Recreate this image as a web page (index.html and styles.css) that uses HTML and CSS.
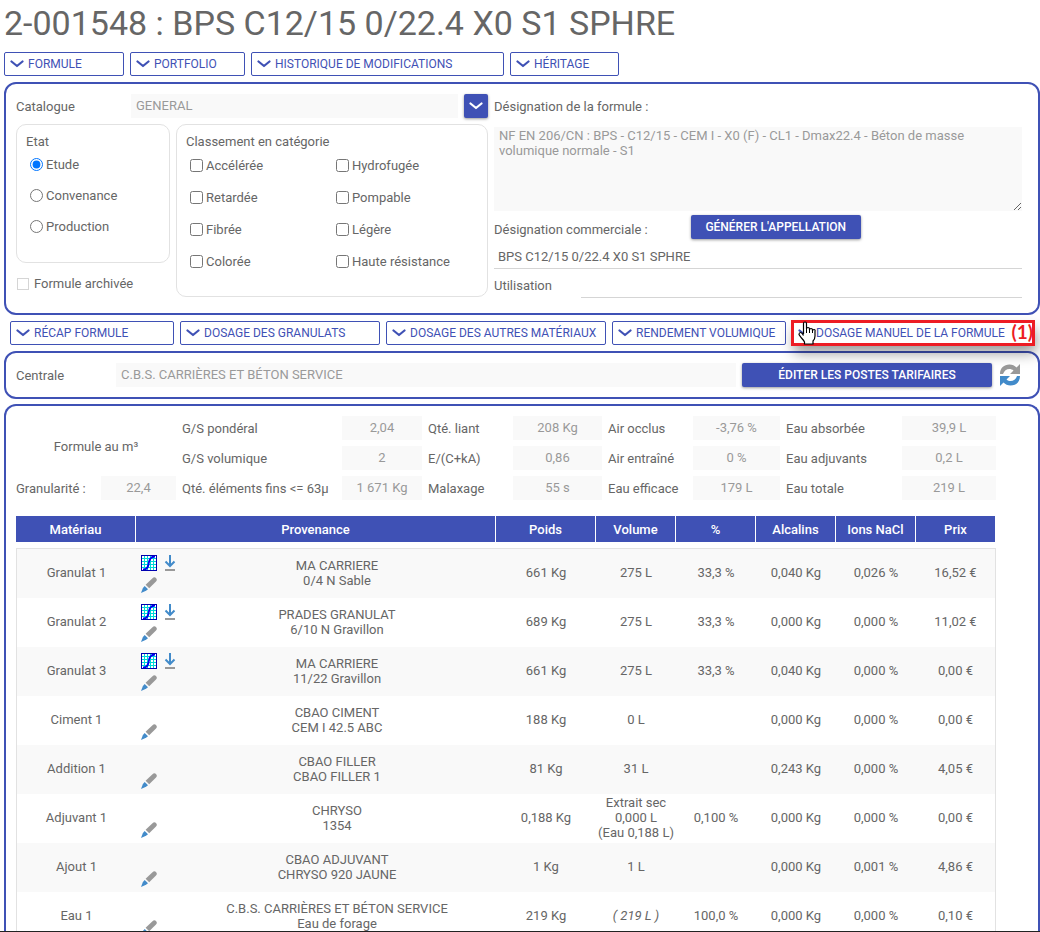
FILE: index.html
```html
<!doctype html>
<html lang="fr">
  <head>
    <meta charset="utf-8">
    <title>2-001548 : BPS C12/15 0/22.4 X0 S1 SPHRE</title>
    <link rel="stylesheet" href="styles.css">
  </head>
  <body>
<svg class="sprite" aria-hidden="true">
  <symbol id="chevron" viewBox="0 0 14 8"><path d="M1.5 1.5 L7 6 L12.500 1.5" fill="none" stroke="currentColor" stroke-width="2.200" stroke-linecap="round" stroke-linejoin="round"/></symbol>
  <symbol id="curve" viewBox="0 0 16 16">
    <rect width="16" height="16" fill="#fff"/>
    <path d="M3.500 1V15M6.500 1V15M9.500 1V15M12.500 1V15M1 3.500H15M1 6.500H15M1 9.500H15M1 12.500H15" stroke="#00d8d8" stroke-width="1"/>
    <path d="M2 14.500H4Q7 13 7.500 9.500Q8 5 9.500 3.500Q11 1.500 14 1.500" fill="none" stroke="#0000f0" stroke-width="1.800"/>
    <rect x=".5" y=".5" width="15" height="15" fill="none" stroke="#0000b0"/>
  </symbol>
  <symbol id="download" viewBox="0 0 12 16">
    <path d="M6 0V11M1.500 6.500L6 11L10.500 6.500" fill="none" stroke="#428bca" stroke-width="2"/>
    <path d="M1 15H11" stroke="#999" stroke-width="2"/>
  </symbol>
  <symbol id="pencil" viewBox="0 0 16 16">
    <path d="M11.500 1.200Q13.200 -.4 15 .9Q16.600 2.800 15 4.500L8.200 11.200L4.600 7.700Z" fill="#999"/>
    <path d="M3.700 9L7 12.200L5 13.700L0 16L1.900 11Z" fill="#428bca"/>
  </symbol>
  <symbol id="refresh" viewBox="0 0 22 24">
    <path d="M1 11C1 5 5 1.500 10.500 1.500C13.500 1.500 15.500 2.500 17.500 4.500L21 1V11H11L14.500 7.500C11 4.500 5.500 6 4 11Z" fill="#999"/>
    <path d="M21 13C21 19 17 22.500 11.500 22.500C8.500 22.500 6.500 21.500 4.500 19.500L1 23V13H11L7.500 16.500C11 19.500 16.500 18 18 13Z" fill="#428bca"/>
  </symbol>
  <symbol id="hand" viewBox="0 0 18 24">
    <path d="M5.500 13V2.500Q5.500 1 7 1T8.500 2.500V8Q8.500 6.500 10 6.500T11.500 8V9Q11.500 7.500 13 7.500T14.500 9V10Q14.500 8.500 16 8.500T17 10.500V15Q17 18 15 20V23H6.500V21Q5.500 19 3.500 17L1 13.500Q1 11.500 2.500 11.500T5.500 14.500" fill="#fff" stroke="#000" stroke-width="1.200"/>
    <path d="M8.500 8V12M11.500 9V12M14.500 10V12" stroke="#000"/>
  </symbol>
</svg>

<main class="page">
<h1>2-001548 : BPS C12/15 0/22.4 X0 S1 SPHRE</h1>

<nav class="toolbar">
  <button class="tab w120"><svg><use href="#chevron"/></svg>FORMULE</button>
  <button class="tab w115"><svg><use href="#chevron"/></svg>PORTFOLIO</button>
  <button class="tab w253"><svg><use href="#chevron"/></svg>HISTORIQUE DE MODIFICATIONS</button>
  <button class="tab w109"><svg><use href="#chevron"/></svg>HÉRITAGE</button>
</nav>

<form class="panel identity">
  <div class="classification">
    <div class="row catalogue">
      <label for="catalogue">Catalogue</label>
      <input type="text" id="catalogue" value="GENERAL" disabled>
      <button type="button" class="solid square" aria-label="Choisir le catalogue"><svg><use href="#chevron"/></svg></button>
    </div>
    <div class="groups">
      <div class="state">
        <fieldset class="box">
          <legend>Etat</legend>
          <label><input type="radio" name="state" checked>Etude</label>
          <label><input type="radio" name="state">Convenance</label>
          <label><input type="radio" name="state">Production</label>
        </fieldset>
        <label class="archived"><input type="checkbox" disabled>Formule archivée</label>
      </div>
      <fieldset class="box categories">
        <legend>Classement en catégorie</legend>
        <label><input type="checkbox">Accélérée</label>
        <label><input type="checkbox">Hydrofugée</label>
        <label><input type="checkbox">Retardée</label>
        <label><input type="checkbox">Pompable</label>
        <label><input type="checkbox">Fibrée</label>
        <label><input type="checkbox">Légère</label>
        <label><input type="checkbox">Colorée</label>
        <label><input type="checkbox">Haute résistance</label>
      </fieldset>
    </div>
  </div>
  <div class="naming">
    <label class="line" for="designation">Désignation de la formule :</label>
    <textarea id="designation" disabled>NF EN 206/CN : BPS - C12/15 - CEM I - X0 (F) - CL1 - Dmax22.4 - Béton de masse volumique normale - S1</textarea>
    <div class="row commercial">
      <label for="commercial">Désignation commerciale :</label>
      <button type="button" class="solid generate">GÉNÉRER L'APPELLATION</button>
    </div>
    <input type="text" class="underlined" id="commercial" value="BPS C12/15 0/22.4 X0 S1 SPHRE">
    <div class="row usage">
      <label for="usage">Utilisation</label>
      <input type="text" class="underlined" id="usage">
    </div>
  </div>
</form>

<nav class="toolbar inset">
  <button class="tab w164"><svg><use href="#chevron"/></svg>RÉCAP FORMULE</button>
  <button class="tab w200"><svg><use href="#chevron"/></svg>DOSAGE DES GRANULATS</button>
  <button class="tab w220"><svg><use href="#chevron"/></svg>DOSAGE DES AUTRES MATÉRIAUX</button>
  <button class="tab w174"><svg><use href="#chevron"/></svg>RENDEMENT VOLUMIQUE</button>
  <div class="marked">
    <button class="tab"><svg><use href="#chevron"/></svg>DOSAGE MANUEL DE LA FORMULE</button>
    <span class="mark">(1)</span>
    <svg class="hand"><use href="#hand"/></svg>
  </div>
</nav>

<div class="panel plant row">
  <label for="plant">Centrale</label>
  <input type="text" id="plant" value="C.B.S. CARRIÈRES ET BÉTON SERVICE" disabled>
  <button type="button" class="solid prices">ÉDITER LES POSTES TARIFAIRES</button>
  <button type="button" class="refresh" aria-label="Actualiser"><svg><use href="#refresh"/></svg></button>
</div>

<section class="panel formula">
  <div class="figures">
    <span class="unit">Formule au m³</span>
    <label for="gsp">G/S pondéral</label><input type="text" id="gsp" value="2,04" disabled>
    <label for="binder">Qté. liant</label><input type="text" id="binder" value="208 Kg" disabled>
    <label for="airo">Air occlus</label><input type="text" id="airo" value="-3,76 %" disabled>
    <label for="wabs">Eau absorbée</label><input type="text" id="wabs" value="39,9 L" disabled>

    <label for="gsv">G/S volumique</label><input type="text" id="gsv" value="2" disabled>
    <label for="ecka">E/(C+kA)</label><input type="text" id="ecka" value="0,86" disabled>
    <label for="aire">Air entraîné</label><input type="text" id="aire" value="0 %" disabled>
    <label for="wadj">Eau adjuvants</label><input type="text" id="wadj" value="0,2 L" disabled>

    <label for="gran">Granularité :</label><input type="text" id="gran" value="22,4" disabled>
    <label for="fines">Qté. éléments fins &lt;= 63µ</label><input type="text" id="fines" value="1 671 Kg" disabled>
    <label for="mix">Malaxage</label><input type="text" id="mix" value="55 s" disabled>
    <label for="weff">Eau efficace</label><input type="text" id="weff" value="179 L" disabled>
    <label for="wtot">Eau totale</label><input type="text" id="wtot" value="219 L" disabled>
  </div>

  <table>
    <colgroup>
      <col class="c-material"><col class="c-tools"><col class="c-origin"><col class="c-weight"><col span="5" class="c-value">
    </colgroup>
    <thead>
      <tr>
        <th>Matériau</th>
        <th colspan="2">Provenance</th>
        <th>Poids</th>
        <th>Volume</th>
        <th>%</th>
        <th>Alcalins</th>
        <th>Ions NaCl</th>
        <th>Prix</th>
      </tr>
    </thead>
    <tbody>
      <tr>
        <td>Granulat 1</td>
        <td class="tools"><div><svg><use href="#curve"/></svg><svg class="dl"><use href="#download"/></svg><svg class="pen"><use href="#pencil"/></svg></div></td>
        <td>MA CARRIERE<br>0/4 N Sable</td>
        <td>661 Kg</td><td>275 L</td><td>33,3 %</td><td>0,040 Kg</td><td>0,026 %</td><td>16,52 €</td>
      </tr>
      <tr>
        <td>Granulat 2</td>
        <td class="tools"><div><svg><use href="#curve"/></svg><svg class="dl"><use href="#download"/></svg><svg class="pen"><use href="#pencil"/></svg></div></td>
        <td>PRADES GRANULAT<br>6/10 N Gravillon</td>
        <td>689 Kg</td><td>275 L</td><td>33,3 %</td><td>0,000 Kg</td><td>0,000 %</td><td>11,02 €</td>
      </tr>
      <tr>
        <td>Granulat 3</td>
        <td class="tools"><div><svg><use href="#curve"/></svg><svg class="dl"><use href="#download"/></svg><svg class="pen"><use href="#pencil"/></svg></div></td>
        <td>MA CARRIERE<br>11/22 Gravillon</td>
        <td>661 Kg</td><td>275 L</td><td>33,3 %</td><td>0,040 Kg</td><td>0,000 %</td><td>0,00 €</td>
      </tr>
      <tr>
        <td>Ciment 1</td>
        <td class="tools"><div><svg class="pen"><use href="#pencil"/></svg></div></td>
        <td>CBAO CIMENT<br>CEM I 42.5 ABC</td>
        <td>188 Kg</td><td>0 L</td><td></td><td>0,000 Kg</td><td>0,000 %</td><td>0,00 €</td>
      </tr>
      <tr>
        <td>Addition 1</td>
        <td class="tools"><div><svg class="pen"><use href="#pencil"/></svg></div></td>
        <td>CBAO FILLER<br>CBAO FILLER 1</td>
        <td>81 Kg</td><td>31 L</td><td></td><td>0,243 Kg</td><td>0,000 %</td><td>4,05 €</td>
      </tr>
      <tr>
        <td>Adjuvant 1</td>
        <td class="tools"><div><svg class="pen"><use href="#pencil"/></svg></div></td>
        <td>CHRYSO<br>1354</td>
        <td>0,188 Kg</td><td>Extrait sec<br>0,000 L<br>(Eau 0,188 L)</td><td>0,100 %</td><td>0,000 Kg</td><td>0,000 %</td><td>0,00 €</td>
      </tr>
      <tr>
        <td>Ajout 1</td>
        <td class="tools"><div><svg class="pen"><use href="#pencil"/></svg></div></td>
        <td>CBAO ADJUVANT<br>CHRYSO 920 JAUNE</td>
        <td>1 Kg</td><td>1 L</td><td></td><td>0,000 Kg</td><td>0,001 %</td><td>4,86 €</td>
      </tr>
      <tr>
        <td>Eau 1</td>
        <td class="tools"><div><svg class="pen"><use href="#pencil"/></svg></div></td>
        <td>C.B.S. CARRIÈRES ET BÉTON SERVICE<br>Eau de forage</td>
        <td>219 Kg</td><td><i>( 219 L )</i></td><td>100,0 %</td><td>0,000 Kg</td><td>0,000 %</td><td>0,10 €</td>
      </tr>
    </tbody>
  </table>
</section>
</main>
  </body>
</html>
```

FILE: styles.css
```css
* {
  box-sizing: border-box;
}

body {
  margin: 0;
  background: #fff;
  color: #666;
  font: 13px/15px Roboto, sans-serif;
}

input, textarea, button {
  font: inherit;
  color: inherit;
}

button {
  cursor: pointer;
}

.sprite {
  position: absolute;
  width: 0;
  height: 0;
}

.page {
  display: flex;
  flex-direction: column;
  height: 100vh;
  padding-left: 4px;
  overflow: hidden;
  border-bottom: 1px solid #222;
}

h1 {
  margin: 0 0 6px;
  font-size: 34px;
  font-weight: 400;
  line-height: 46px;
}

/* toolbars */
.toolbar {
  display: flex;
  gap: 6px;
  margin-bottom: 6px;
}

.toolbar.inset {
  padding-left: 6px;
}

.tab {
  display: flex;
  align-items: center;
  height: 24px;
  padding: 0 0 0 5px;
  border: 1px solid #3f51b5;
  border-radius: 2px;
  background: #fff;
  color: #3f51b5;
  font-size: 12px;
  white-space: nowrap;
}

.tab svg, .square svg {
  width: 14px;
  height: 8px;
}

.tab svg {
  margin-right: 4px;
}

.w109 { width: 109px; }
.w115 { width: 115px; }
.w120 { width: 120px; }
.w164 { width: 164px; }
.w174 { width: 174px; }
.w200 { width: 200px; }
.w220 { width: 220px; }
.w253 { width: 253px; }

.marked {
  position: relative;
  display: flex;
  width: 242px;
  outline: 3px solid #ed1c24;
  outline-offset: -2px;
  box-shadow: 2px 8px 14px rgba(0, 0, 0, .4);
}

.marked .tab {
  width: 100%;
}

.mark {
  position: absolute;
  right: 1px;
  top: 1px;
  color: #ed1c24;
  font: bold 19px/20px Lato, sans-serif;
}

.hand {
  position: absolute;
  left: 6px;
  top: 0;
  width: 18px;
  height: 24px;
}

/* panels */
.panel {
  margin-bottom: 6px;
  padding: 10px;
  border: 2px solid #3f51b5;
  border-radius: 12px;
}

.row {
  display: flex;
  align-items: center;
  gap: 6px;
}

input[type=text] {
  min-width: 0;
  height: 24px;
  padding: 0 5px 2px;
  border: 0;
  background: none;
}

input[type=text]:disabled, textarea:disabled {
  background: #f9f9f9;
  color: #999;
}

input[type=radio], input[type=checkbox] {
  width: 13px;
  height: 13px;
  margin: 0 3px;
}

.solid {
  height: 24px;
  padding: 0 8px;
  border: 0;
  border-radius: 2px;
  background: #3f51b5;
  color: #fff;
  font-size: 12px;
  font-weight: 500;
  white-space: nowrap;
  box-shadow: 0 1px 3px rgba(0, 0, 0, .4);
}

.solid.square {
  display: flex;
  align-items: center;
  justify-content: center;
  width: 24px;
  padding: 0;
}

.identity {
  display: grid;
  grid-template-columns: 472px 1fr;
  gap: 6px;
  padding-right: 16px;
}

.catalogue label {
  width: 109px;
}

.catalogue input {
  flex: 1;
}

.groups {
  display: flex;
  gap: 6px;
  margin-top: 6px;
  padding-bottom: 6px;
}

.state {
  width: 154px;
}

.box {
  margin: 0;
  padding: 9px;
  border: 1px solid #e2e2e2;
  border-radius: 10px;
}

.box legend {
  float: left;
  width: 100%;
  padding: 0;
}

.box label {
  display: flex;
  align-items: center;
  clear: both;
  height: 31px;
  padding-left: 1px;
}

.state .box {
  height: 139px;
}

.archived {
  display: flex;
  align-items: center;
  margin-top: 13px;
}

.archived input[type=checkbox] {
  width: 12px;
  height: 12px;
  margin: 0 5px 0 1px;
  appearance: none;
  border: 1px solid #d5d5d5;
}

.categories {
  flex: 1;
  display: grid;
  grid-template-columns: 146px 1fr;
  align-content: start;
  height: 173px;
}

.categories legend {
  grid-column: 1 / -1;
}

.categories label {
  height: 32px;
}

.naming {
  display: flex;
  flex-direction: column;
}

.line {
  line-height: 26px;
}

textarea {
  height: 84px;
  margin: 7px 0 4px;
  padding: 1px 5px;
  border: 0;
  resize: vertical;
}

.commercial {
  gap: 43px;
}

.commercial label {
  padding-top: 4px;
}

.generate {
  width: 170px;
}

input.underlined {
  padding: 0 4px;
  border-bottom: 1px solid #d5d5d5;
}

#commercial {
  height: 30px;
  padding-top: 6px;
}

.usage label {
  width: 81px;
  margin-top: 4px;
}

.usage input {
  flex: 1;
  height: 29px;
}

.plant label {
  width: 94px;
}

.plant input {
  flex: 1;
}

.plant {
  min-height: 48px;
  margin-bottom: 5px;
  padding-right: 16px;
}

.prices {
  width: 250px;
}

.refresh {
  width: 24px;
  height: 24px;
  padding: 0;
  border: 0;
  background: none;
}

.refresh svg {
  width: 22px;
  height: 24px;
}

/* formula figures and table */
.formula {
  flex: 1;
  min-height: 0;
  margin-bottom: 0;
  overflow: hidden;
  border-bottom: 0;
  border-radius: 12px 12px 0 0;
}

.figures {
  display: grid;
  grid-template-columns: 79fr 75fr 154fr 80fr 79fr 89fr 79fr 87fr 110fr 94fr;
  gap: 6px;
  align-items: center;
  max-width: 980px;
  margin-bottom: 16px;
}

.figures input {
  width: 100%;
  text-align: center;
}

.unit {
  grid-column: span 2;
  grid-row: span 2;
  padding-top: 6px;
  text-align: center;
}

.figures label {
  white-space: nowrap;
}

table {
  width: 100%;
  max-width: 980px;
  table-layout: fixed;
  border-spacing: 0;
  text-align: center;
}

.c-material { width: 120px; }
.c-tools { width: 42px; }
.c-origin { width: 318px; }
.c-weight { width: 100px; }

th {
  height: 26px;
  padding: 0;
  border-right: 1px solid #fff;
  background: #3f51b5;
  color: #fff;
  font-weight: 500;
}

tbody::before {
  content: "";
  display: block;
  height: 6px;
}

td {
  height: 49px;
  padding: 0 0 2px;
}

td.tools {
  padding: 0;
}

tbody tr:nth-child(odd) {
  background: #f9f9f9;
}

tbody tr:first-child td {
  height: 50px;
  border-top: 1px solid #e2e2e2;
}

td:first-child {
  border-left: 1px solid #e2e2e2;
}

td:last-child {
  border-right: 1px solid #e2e2e2;
}

.tools div {
  display: grid;
  grid-template-columns: 16px 12px;
  grid-template-rows: 16px 16px;
  gap: 6px 7px;
  padding-left: 5px;
}

.tools svg {
  width: 16px;
  height: 16px;
}

.tools .dl {
  width: 12px;
}

.tools .pen {
  grid-row: 2;
  grid-column: 1;
}
```
